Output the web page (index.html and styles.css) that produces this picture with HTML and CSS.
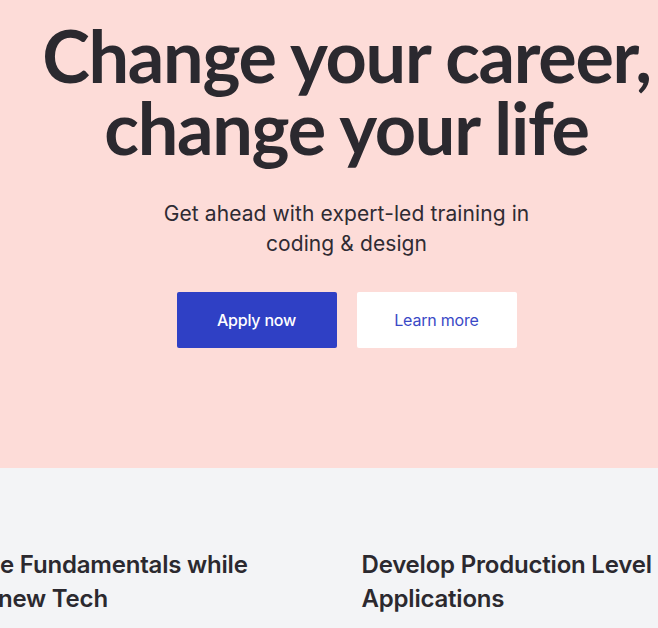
FILE: index.html
```html
<!DOCTYPE html>
<html lang="en">
<head>
<meta charset="utf-8">
<title>Change your career</title>
<link rel="stylesheet" href="styles.css">
</head>
<body>
<div class="page">
  <section class="hero">
    <h1 class="hero-title">Change your career, change your life</h1>
    <p class="hero-sub">Get ahead with expert-led training in coding &amp; design</p>
    <div class="hero-actions">
      <a class="btn btn-primary" href="#">Apply now</a>
      <a class="btn btn-secondary" href="#">Learn more</a>
    </div>
  </section>
  <section class="features">
    <div class="features-grid">
      <div class="feature"><h3 class="feature-title">Master the Fundamentals while Learning new Tech</h3></div>
      <div class="feature"><h3 class="feature-title">Develop Production Level Applications</h3></div>
    </div>
  </section>
</div>
</body>
</html>
```
FILE: styles.css
```css
html, body {
  margin: 0;
  padding: 0;
  overflow-x: hidden;
}
body {
  font-family: Inter, "Open Sans", sans-serif;
  color: #2b292f;
  background: #f3f4f6;
}
.page {
  width: 693px;
}
.hero {
  background: #fddcd8;
  padding: 19px 0 120px;
  display: flex;
  flex-direction: column;
  align-items: center;
  text-align: center;
}
.hero-title {
  margin: 0;
  width: 640px;
  font-family: Lato, sans-serif;
  font-weight: 700;
  font-size: 72px;
  line-height: 72px;
  letter-spacing: -1.3px;
  color: #2b292f;
}
.hero-sub {
  margin: 36px 0 0;
  max-width: 380px;
  font-size: 21px;
  line-height: 30px;
  font-weight: 400;
  letter-spacing: 0.1px;
  color: #2f2b33;
}
.hero-actions {
  margin-top: 33px;
  display: flex;
  gap: 20px;
}
.btn {
  width: 160px;
  height: 56px;
  display: flex;
  align-items: center;
  justify-content: center;
  border-radius: 2px;
  font-size: 16px;
  font-weight: 500;
  letter-spacing: -0.2px;
  text-decoration: none;
}
.btn-primary {
  background: #2f40c5;
  color: #ffffff;
}
.btn-secondary {
  background: #ffffff;
  color: #3a49c6;
  font-weight: 400;
}
.features {
  background: #f3f4f6;
  padding: 80px 0 40px;
}
.features-grid {
  width: 910px;
  margin-left: calc(50% - 455px);
  display: grid;
  grid-template-columns: 440px 440px;
  column-gap: 30px;
}
.feature-title {
  margin: 0;
  max-width: 360px;
  font-size: 24px;
  line-height: 34px;
  font-weight: 600;
  letter-spacing: -0.2px;
  color: #2b292f;
}
```
